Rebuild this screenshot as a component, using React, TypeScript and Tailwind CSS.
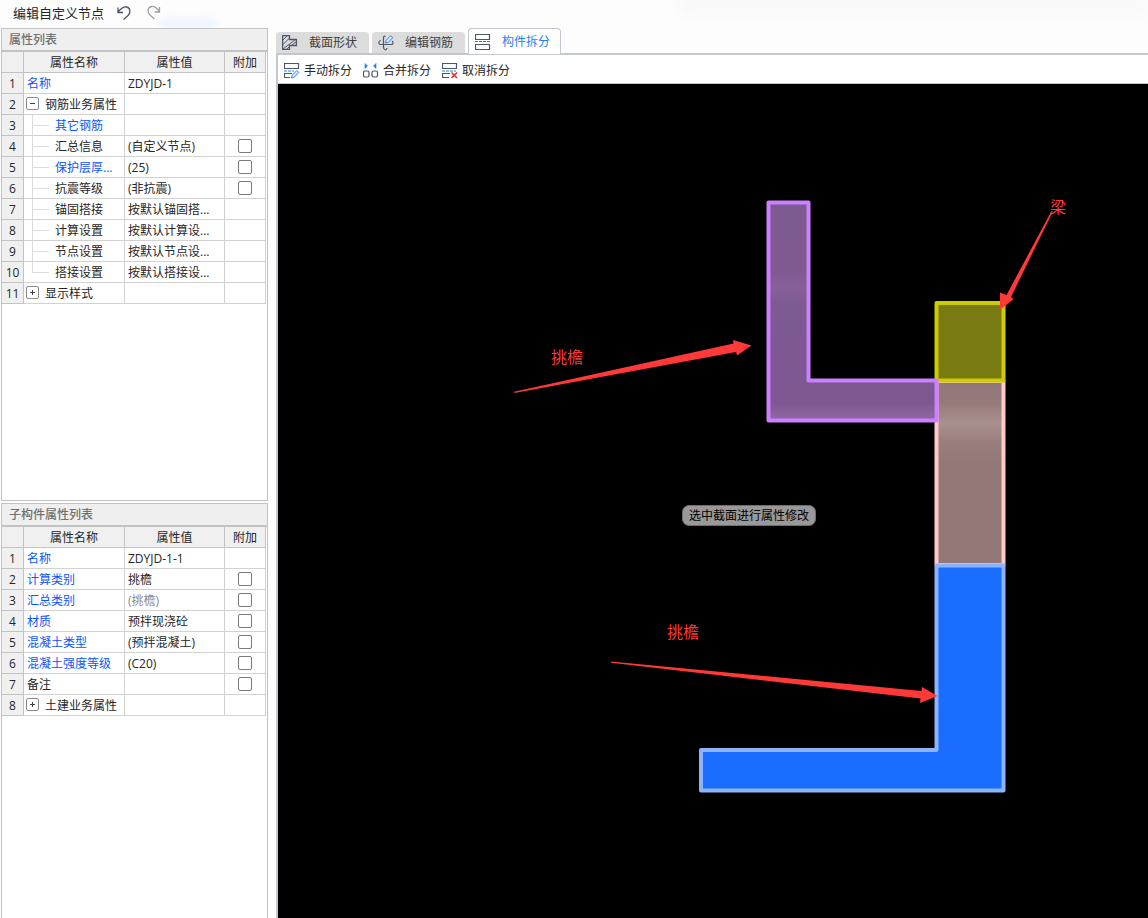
import { useState } from 'react';
import type { ReactNode } from 'react';
import clsx from 'clsx';

interface Row {
  name: string;
  value?: string;
  blue?: boolean;
  muted?: boolean;
  check?: boolean;
  group?: 'open' | 'closed';
  child?: 'mid' | 'last';
}

const mainRows: Row[] = [
  { name: '名称', value: 'ZDYJD-1', blue: true },
  { name: '钢筋业务属性', group: 'open' },
  { name: '其它钢筋', blue: true, child: 'mid' },
  { name: '汇总信息', value: '(自定义节点)', check: true, child: 'mid' },
  { name: '保护层厚...', value: '(25)', blue: true, check: true, child: 'mid' },
  { name: '抗震等级', value: '(非抗震)', check: true, child: 'mid' },
  { name: '锚固搭接', value: '按默认锚固搭...', child: 'mid' },
  { name: '计算设置', value: '按默认计算设...', child: 'mid' },
  { name: '节点设置', value: '按默认节点设...', child: 'mid' },
  { name: '搭接设置', value: '按默认搭接设...', child: 'last' },
  { name: '显示样式', group: 'closed' },
];

const subRows: Row[] = [
  { name: '名称', value: 'ZDYJD-1-1', blue: true },
  { name: '计算类别', value: '挑檐', blue: true, check: true },
  { name: '汇总类别', value: '(挑檐)', blue: true, muted: true, check: true },
  { name: '材质', value: '预拌现浇砼', blue: true, check: true },
  { name: '混凝土类型', value: '(预拌混凝土)', blue: true, check: true },
  { name: '混凝土强度等级', value: '(C20)', blue: true, check: true },
  { name: '备注', check: true },
  { name: '土建业务属性', group: 'closed' },
];

function Icon({ children }: { children: ReactNode }) {
  return (
    <svg width="16" height="16" viewBox="0 0 16 16" fill="none" stroke="#4b5668" className="shrink-0" aria-hidden="true">
      {children}
    </svg>
  );
}

const SectionIcon = () => (
  <Icon>
    <path d="M.6 .6H7.5V4.5H14.4V10.5H7.5V14.4H.6Z" strokeWidth="1.3" />
    <path d="M.5 5.5L5.5 .5M.5 10L7.5 3M1 14L13.5 4.5M5 14L7.5 11.5M9.5 10.5L14.5 6.5" />
  </Icon>
);

const RebarIcon = () => (
  <Icon>
    <path d="M7.5 1.5C6 .5 5.5 1.5 5.5 3V12C5.5 15.5 8.5 15.5 9 13" strokeWidth="1.2" />
    <path d="M3 5.5C.5 5.5 -.5 9.5 3 9.5H13C15.5 9.5 15.5 7 14 6" strokeWidth="1.2" />
    <path d="M7.5 8L8.2 5.4L12.5 .8L14.8 2.6L10.4 7.2Z" fill="#dcecff" stroke="#2f86e8" />
  </Icon>
);

const SplitIcon = () => (
  <Icon>
    <path d="M.5 .5H14.5V5.5H.5ZM.5 10.5H14.5V15.5H.5Z" strokeWidth="1.2" />
    <path d="M0 7.5H3M4 7.5H7M8 7.5H11M12 7.5H15" stroke="#1c7ff0" strokeWidth="1.2" />
  </Icon>
);

const ManualIcon = () => (
  <Icon>
    <path d="M.5 .5H14.5V5.5H.5ZM6 14.5H.5V10.5H8" strokeWidth="1.2" />
    <path d="M0 8H3M4 8H7M8 8H10" stroke="#1c7ff0" strokeWidth="1.2" />
    <path d="M7.5 15L8.2 12.4L12.8 7.5L14.8 9.4L10.2 14.2Z" fill="#dcecff" stroke="#2f86e8" />
  </Icon>
);

const MergeIcon = () => (
  <Icon>
    <rect x=".5" y="8" width="5.5" height="6" rx="1.5" strokeWidth="1.2" />
    <rect x="9" y="8" width="5.5" height="6" rx="1.5" strokeWidth="1.2" />
    <path d="M2 .5V5.5L4.5 3ZM13 .5V5.5L10.5 3Z" fill="#1c7ff0" stroke="#1c7ff0" strokeWidth=".6" />
  </Icon>
);

const CancelIcon = () => (
  <Icon>
    <path d="M.5 .5H14.5V5.5H.5ZM7 14.5H.5V10.5H8" strokeWidth="1.2" />
    <path d="M0 8H3M4 8H7M8 8H11M12 8H14" stroke="#1c7ff0" strokeWidth="1.2" />
    <path d="M9.5 9.5L15 15M15 9.5L9.5 15" stroke="#e02020" strokeWidth="1.4" />
  </Icon>
);

function PropertyPanel({ title, rows, className }: { title: string; rows: Row[]; className?: string }) {
  const th = 'h-[21px] border-r border-b border-[#c3c3c3] bg-[#f0f0f0] px-0 pt-0.5 pb-0 font-normal';
  return (
    <section className={clsx('overflow-hidden border-[#c3c3c3] bg-white', className)}>
      <h2 className="h-[23px] border-b-2 border-[#c3c3c3] bg-[#efefef] pl-[7px] font-medium leading-[21px] text-[#707070]">
        {title}
      </h2>
      <table className="w-[264px] table-fixed border-separate border-spacing-0 leading-[18px]">
        <colgroup>
          <col className="w-[22px]" />
          <col className="w-[101px]" />
          <col className="w-[100px]" />
          <col className="w-[41px]" />
        </colgroup>
        <thead>
          <tr>
            <th className={th} />
            <th className={th}>属性名称</th>
            <th className={th}>属性值</th>
            <th className={th}>附加</th>
          </tr>
        </thead>
        <tbody>
          {rows.map((r, i) => (
            <PropertyRow key={r.name} row={r} index={i + 1} />
          ))}
        </tbody>
      </table>
    </section>
  );
}

function PropertyRow({ row, index }: { row: Row; index: number }) {
  const td = 'h-[21px] border-r border-b border-[#d2d2d2]';
  return (
    <tr>
      <td className="h-[21px] border-r border-b border-[#c3c3c3] bg-[#f0f0f0] px-0 pt-0.5 pb-0 text-center">{index}</td>
      <td className={clsx(td, 'p-0')}>
        <div className="flex h-5 items-center">
          {row.group && (
            <button
              type="button"
              aria-label={row.group === 'open' ? '收起' : '展开'}
              className="mr-1.5 mb-px ml-0.5 flex h-[13px] w-[13px] items-center justify-center rounded-[2px] border border-[#8c8c8c] bg-white"
            >
              <svg width="5" height="5" viewBox="0 0 5 5" stroke="#404040" aria-hidden="true">
                <path d={row.group === 'open' ? 'M0 2.5H5' : 'M0 2.5H5M2.5 0V5'} />
              </svg>
            </button>
          )}
          {row.child && (
            <span className="mr-1.5 ml-2 flex h-full w-[17px] flex-col">
              <span className="h-[11px] border-b border-l border-[#dcdcdc]" />
              {row.child === 'mid' && <span className="flex-1 border-l border-[#dcdcdc]" />}
            </span>
          )}
          <span className={clsx('pt-0.5 whitespace-nowrap', !row.group && !row.child && 'pl-[3px]', row.blue && 'text-[#0a55ff]')}>
            {row.name}
          </span>
        </div>
      </td>
      <td className={clsx(td, 'pt-0.5 pr-0 pb-0 pl-[3px] whitespace-nowrap', row.muted && 'text-[#8a8a8a]')}>{row.value}</td>
      <td className={clsx(td, 'p-0')}>
        {row.check && (
          <input
            type="checkbox"
            aria-label={row.name}
            className="mx-auto block h-3.5 w-3.5 appearance-none rounded-[2px] border border-[#7a7a7a] bg-white checked:bg-[#1c7ff0]"
          />
        )}
      </td>
    </tr>
  );
}

// Section outlines, drawn back to front
function SectionDrawing() {
  return (
    <svg className="h-full w-full" strokeWidth="4" strokeLinejoin="round" aria-hidden="true">
      <defs>
        <linearGradient id="pink" x1="0" y1="0" x2="0" y2="1">
          <stop offset="0" stopColor="#947678" />
          <stop offset=".12" stopColor="#967a7a" />
          <stop offset=".23" stopColor="#ab9090" />
          <stop offset=".33" stopColor="#9a7e7e" />
          <stop offset=".45" stopColor="#947878" />
          <stop offset="1" stopColor="#947878" />
        </linearGradient>
        <linearGradient id="purple" x1="0" y1="0" x2="0" y2="1">
          <stop offset="0" stopColor="#7d5a90" />
          <stop offset=".32" stopColor="#7f5a92" />
          <stop offset=".39" stopColor="#87609a" />
          <stop offset=".47" stopColor="#7d5a91" />
          <stop offset=".92" stopColor="#7e5791" />
          <stop offset="1" stopColor="#9068a3" />
        </linearGradient>
      </defs>
      <rect x="658.5" y="297" width="67" height="184" fill="url(#pink)" stroke="#ffcaca" />
      <rect x="658.5" y="219" width="67" height="77.5" fill="#7a7a12" stroke="#cccc00" />
      <path d="M490.5 118.5H530.5V296.5H658.5V336.5H490.5Z" fill="url(#purple)" stroke="#cc80ff" />
      <path d="M658.5 481.5H725.5V706.5H423V666H658.5Z" fill="#1a6dff" stroke="#8cb3ff" />
      <g fill="#ff3838" stroke="none">
        <path d="M236 307.8L455.5 259.5L455 256L473.5 261.5L459 271.5L458 268L236.5 309Z" />
        <path d="M333 577.5L643.5 607L644 603L659.5 612L642 619L642.5 614.5L333 578.8Z" />
        <path d="M773.5 127L728.5 211L722 208.5V226L735.5 215L733 213L774.8 127.5Z" />
      </g>
    </svg>
  );
}

const tabs = [
  { label: '截面形状', icon: <SectionIcon /> },
  { label: '编辑钢筋', icon: <RebarIcon /> },
  { label: '构件拆分', icon: <SplitIcon /> },
];

const tools = [
  { label: '手动拆分', icon: <ManualIcon /> },
  { label: '合并拆分', icon: <MergeIcon /> },
  { label: '取消拆分', icon: <CancelIcon /> },
];

export default function App() {
  const [active, setActive] = useState(2);

  return (
    <div className="relative flex h-screen flex-col overflow-hidden bg-[#fdfdfd] font-['Open_Sans','Noto_Sans_CJK_SC',sans-serif] text-[12px] leading-5 text-[#262626]">
      {/* Frosted title bar backdrop */}
      <div className="absolute top-0 right-0 h-3.5 w-[468px] bg-[#f7f7f7] blur-[6px]" />
      <div className="absolute top-5 left-40 h-2 w-14 bg-[#e6f2fe] blur-[5px]" />

      <header className="relative flex h-7 shrink-0 items-center pb-0.5 pl-[13px]">
        <h1 className="text-[13px] leading-6">编辑自定义节点</h1>
        <button type="button" aria-label="撤销" className="ml-3">
          <svg width="16" height="16" viewBox="0 0 16 16" fill="none" stroke="#47536b" strokeWidth="1.3" aria-hidden="true">
            <path d="M2 2.5V7.5H7M2 7C5 3.5 8 1.5 10.5 2C15 3 14.5 8 12 10.5L7.5 14.5" />
          </svg>
        </button>
        <button type="button" aria-label="重做" className="ml-3.5">
          <svg width="16" height="16" viewBox="0 0 16 16" fill="none" stroke="#a0a0a0" strokeWidth="1.3" aria-hidden="true">
            <path d="M13.5 2V7H8.5M13.5 6.5C10.5 2.5 8 1 5.5 1.5C1 2.5 1.5 7.5 4 10L8.5 14" />
          </svg>
        </button>
      </header>

      <div className="relative flex min-h-0 flex-1">
        <aside className="ml-px grid w-[267px] shrink-0 grid-rows-[473fr_415fr] gap-0.5">
          <PropertyPanel title="属性列表" rows={mainRows} className="border" />
          <PropertyPanel title="子构件属性列表" rows={subRows} className="border-x border-t" />
        </aside>

        <main className="ml-2 flex min-w-0 flex-1 flex-col">
          <div role="tablist" className="flex h-[25px] shrink-0 items-end gap-[3px]">
            {tabs.map((t, i) => (
              <button
                key={t.label}
                type="button"
                role="tab"
                aria-selected={i === active}
                onClick={() => setActive(i)}
                className={clsx(
                  'flex w-[93px] items-center gap-[11px] rounded-t pl-1.5',
                  i === active
                    ? 'relative -mb-px h-[26px] border border-b-0 border-[#c2c8cd] bg-white text-[#1c7ff0]'
                    : 'h-[21px] bg-[#dcdcdc] text-[#404040]',
                )}
              >
                {t.icon}
                <span className="whitespace-nowrap">{t.label}</span>
              </button>
            ))}
          </div>

          <div className="flex min-h-0 flex-1 flex-col border-t-2 border-l-2 border-[#c2c8cd]">
            <div role="toolbar" className="flex h-[29px] shrink-0 items-center gap-[11px] border-b border-[#c3c3c3] bg-white pt-[3px] pl-1.5">
              {tools.map((t) => (
                <button key={t.label} type="button" className="flex items-center gap-1 whitespace-nowrap">
                  {t.icon}
                  {t.label}
                </button>
              ))}
            </div>

            <div className="relative min-h-0 flex-1 overflow-hidden bg-black">
              <SectionDrawing />
              <span className="absolute top-[261px] left-[273px] text-[16px] leading-6 text-[#ff3838]">挑檐</span>
              <span className="absolute top-[111px] left-[772px] text-[16px] leading-6 text-[#ff3838]">梁</span>
              <span className="absolute top-[536px] left-[389px] text-[16px] leading-6 text-[#ff3838]">挑檐</span>
              <span className="absolute top-[421px] left-[404px] rounded-[7px] border border-[#6e6e6e] bg-[#999999] px-1.5 leading-[19px] whitespace-nowrap text-black">
                选中截面进行属性修改
              </span>
            </div>
          </div>
        </main>
      </div>
    </div>
  );
}
